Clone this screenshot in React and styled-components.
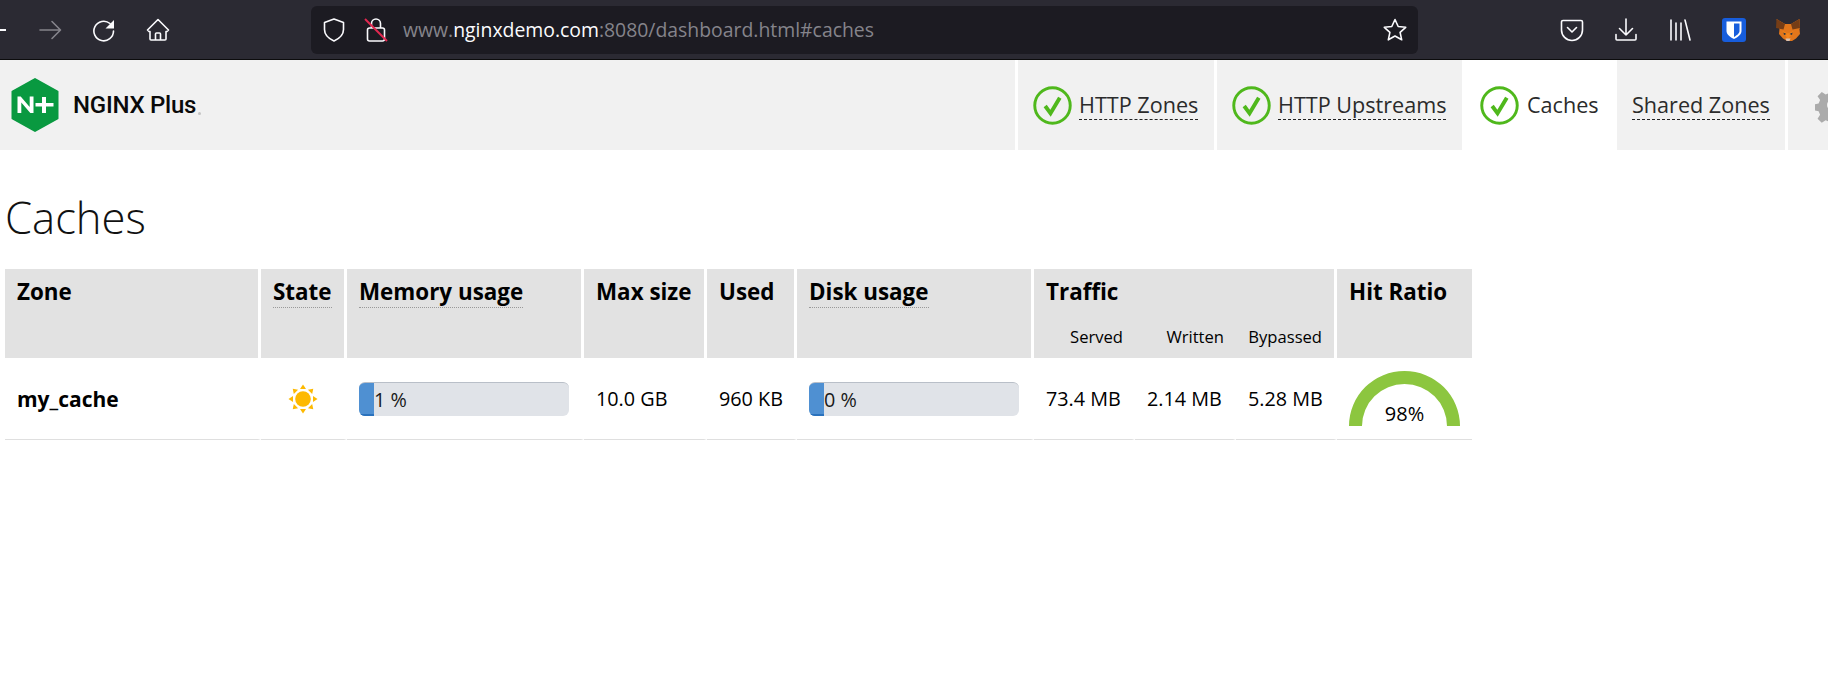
import React from "react";
import styled, { createGlobalStyle } from "styled-components";

const Global = createGlobalStyle`
  html, body { margin: 0; padding: 0; background: #fff; overflow: hidden; }
  body { font-family: "Open Sans", "Liberation Sans", sans-serif; color: #000; }
`;

const Chrome = styled.div`
  height: 59px; background: #2b2a33; border-bottom: 1px solid #0c0c0d;
  display: flex; align-items: center; position: relative;
`;
const ToolIcon = styled.svg`
  width: 24px; height: 24px; flex: none; display: block;
  fill: none; stroke: ${p => p.$dim ? "#85848b" : "#fbfbfe"}; stroke-width: 1.6; stroke-linecap: round; stroke-linejoin: round;
`;
const NavGroup = styled.div`
  display: flex; align-items: center; gap: 30px; width: 311px; padding-left: 38px; box-sizing: border-box;
`;
const BackStub = styled.div`
  position: absolute; left: 0; top: 29px; width: 6px; height: 2px; background: #fbfbfe;
`;
const UrlBar = styled.div`
  width: 1107px; height: 48px; background: #1c1b22; border-radius: 6px;
  display: flex; align-items: center; padding: 0 11px; box-sizing: border-box;
`;
const LockIcon = styled.svg`
  width: 24px; height: 24px; flex: none; margin-left: 18px;
`;
const UrlText = styled.div`
  flex: 1; margin-left: 15px; font-size: 19.4px; color: #85848b; white-space: nowrap;
  b { font-weight: 400; color: #fbfbfe; }
`;
const RightIcons = styled.div`
  display: flex; align-items: center; gap: 30px; margin-left: 142px;
`;
const ExtIcon = styled.svg`
  width: 24px; height: 24px; flex: none; display: block;
`;

const Nav = styled.div`
  height: 90px; display: flex; background: #fff; gap: 3px; overflow: hidden;
`;
const Brand = styled.div`
  width: 1015px; flex: none; background: #f1f1f1; display: flex; align-items: center; padding-left: 11px; box-sizing: border-box;
`;
const BrandMark = styled.svg`
  width: 48px; height: 54px; flex: none;
`;
const BrandName = styled.span`
  font-family: "Roboto", "Liberation Sans", sans-serif; font-weight: 500; font-size: 24px; letter-spacing: -.25px; margin-left: 14px; color: #0a0a0a;
`;
const BrandDot = styled.span`
  width: 3px; height: 3px; border-radius: 50%; background: #c4c4c4; margin: 16px 0 0 2px; flex: none;
`;
const Tab = styled.div`
  width: ${p => p.$w}px; flex: none; background: ${p => p.$active ? "#fff" : "#f1f1f1"};
  display: flex; align-items: center; padding-left: ${p => p.$pad}px; gap: ${p => p.$gap || 7}px; box-sizing: border-box;
  margin-left: ${p => p.$flush ? "-3px" : 0};
  font-size: 21.6px; color: #2b2b2b;
`;
const TabLabel = styled.span`
  border-bottom: ${p => p.$plain ? "1px solid transparent" : "1px dashed #222"};
  line-height: 28px; white-space: nowrap; margin-top: 1px;
`;

const Content = styled.div`
  padding: 0 0 0 5px;
`;
const Title = styled.h1`
  font-size: 43.6px; font-weight: 300; margin: 0; padding-top: 37px; height: 119px; line-height: 60px; box-sizing: border-box; color: #111;
`;
const Table = styled.table`
  border-collapse: separate; border-spacing: 0; table-layout: fixed; width: 1467px;
`;
const Col = styled.col`
  width: ${p => p.$w}px;
`;
const Th = styled.th`
  background: #e2e2e2; font-size: 22.4px; font-weight: 700; text-align: left; vertical-align: top;
  padding: 8px 12px 0; box-sizing: border-box; border-right: 3px solid #fff; height: 55px; line-height: 30px; white-space: nowrap;
  &:last-child { border-right: 0; }
`;
const SubTh = styled.th`
  background: #e2e2e2; font-size: 16.6px; font-weight: 400; text-align: right; padding: 3px 12px 0 0; height: 34px; line-height: 20px; vertical-align: top;
  box-sizing: border-box; border-right: ${p => p.$last ? "3px solid #fff" : "0"};
`;
const Hint = styled.span`
  border-bottom: 1px dotted #999; display: inline-block; line-height: 30px; height: 30px;
`;
const Td = styled.td`
  height: 82px; box-sizing: border-box; padding: 0 12px; border-bottom: 1px solid #dfdfdf; border-right: 3px solid #fff;
  font-weight: ${p => p.$bold ? 700 : 400}; white-space: nowrap;
  font-size: ${p => p.$bold ? 21 : 19.8}px;
  &:last-child { border-right: 0; }
`;
const Bar = styled.div`
  height: 34px; width: 210px; background: #e0e3e8; border-radius: 6px; border-top: 1px solid #b9bfc8; box-sizing: border-box;
  display: flex; align-items: center; overflow: hidden; font-size: 19.8px; color: #1a1a1a;
`;
const BarFill = styled.div`
  width: 15px; height: 100%; background: #4f90d2; border-bottom: 2px solid #2a72bd; box-sizing: border-box; flex: none;
`;
const Gauge = styled.div`
  position: relative; width: 111px; height: 55px;
`;
const GaugeArc = styled.svg`
  display: block; width: 111px; height: 55px;
`;
const GaugeText = styled.div`
  position: absolute; left: 0; right: 0; bottom: 0; text-align: center; font-size: 20px; line-height: 24px;
`;
const GaugeCell = styled(Td)`
  vertical-align: top; padding-top: 13px;
`;
const SunIcon = styled.svg`
  width: 30px; height: 30px; display: block; margin: 0 auto;
`;
const CheckIcon = styled.svg`
  width: 39px; height: 39px; flex: none;
`;
const GearIcon = styled.svg`
  width: 36px; height: 36px; flex: none;
`;

const Check = () => (
  <CheckIcon viewBox="0 0 40 40">
    <circle cx="20" cy="20" r="18.2" fill="none" stroke="#4fb81c" strokeWidth="3" />
    <path d="M12.5 20.5 L18 28 L27.5 12" fill="none" stroke="#4fb81c" strokeWidth="4" />
  </CheckIcon>
);

const Sun = () => (
  <SunIcon viewBox="0 0 30 30">
    <circle cx="15" cy="15" r="7.8" fill="#fdb900" />
    {[0, 45, 90, 135, 180, 225, 270, 315].map(a => (
      <polygon key={a} points="12,5 18,5 15,0.5" fill="#fdb900" transform={`rotate(${a} 15 15)`} />
    ))}
  </SunIcon>
);

export default function App() {
  return (
    <>
      <Global />
      <Chrome>
        <BackStub />
        <NavGroup>
          <ToolIcon viewBox="0 0 24 24" $dim><path d="M2 12h20M14 3.500l8.500 8.500-8.500 8.500" /></ToolIcon>
          <ToolIcon viewBox="0 0 24 24">
            <path d="M18 5.500A9.800 9.800 0 1 0 21.500 13" />
            <path d="M22 2v8.500h-8.500z" fill="#fbfbfe" stroke="none" />
          </ToolIcon>
          <ToolIcon viewBox="0 0 24 24"><path d="M12 1.500 1.500 12l1.500 1.500h1V21a1 1 0 0 0 1 1h14a1 1 0 0 0 1-1v-7.500h1l1.500-1.500zM9.500 22v-6a1 1 0 0 1 1-1h3a1 1 0 0 1 1 1v6" /></ToolIcon>
        </NavGroup>
        <UrlBar>
          <ToolIcon viewBox="0 0 24 24"><path d="M12 1 2.500 4.500v7c0 5.500 4 9 9.500 11.500 5.500-2.500 9.500-6 9.500-11.500v-7z" /></ToolIcon>
          <LockIcon viewBox="0 0 24 24">
            <g fill="none" stroke="#fbfbfe" strokeWidth="1.600"><path d="M7.500 10V5.500a4.500 4.500 0 0 1 9 0V10" /><rect x="3.500" y="10" width="17" height="13" rx="2" /></g>
            <path d="M1 1 23 23" stroke="#e22850" strokeWidth="2" />
          </LockIcon>
          <UrlText>www.<b>nginxdemo.com</b>:8080/dashboard.html#caches</UrlText>
          <ToolIcon viewBox="0 0 24 24"><path d="m12 1.500 3.200 7 7.500.8-5.600 5.100 1.600 7.400-6.700-3.800-6.700 3.800 1.600-7.400L1.300 9.300l7.500-.8z" /></ToolIcon>
        </UrlBar>
        <RightIcons>
          <ToolIcon viewBox="0 0 24 24"><path d="M3 2.500h18a1.500 1.500 0 0 1 1.500 1.500v8a10.500 10.500 0 0 1-21 0V4A1.500 1.500 0 0 1 3 2.500zM7.500 9.500l4.500 4.500 4.500-4.500" /></ToolIcon>
          <ToolIcon viewBox="0 0 24 24"><path d="M12 1v16M5.500 10.500l6.500 6.500 6.500-6.500M2 16.500V21a1 1 0 0 0 1 1h18a1 1 0 0 0 1-1v-4.500" /></ToolIcon>
          <ToolIcon viewBox="0 0 24 24"><path d="M3 2v20M8 5v17M13 5v17M17 2 22 22" /></ToolIcon>
          <ExtIcon viewBox="0 0 24 24">
            <rect width="24" height="24" rx="3" fill="#175ddc" />
            <path d="M4.500 3.500h15v9.500c0 3.500-3.500 6-7.500 8-4-2-7.500-4.500-7.500-8z" fill="#fff" />
            <path d="M12 5.500h5.500v7.500c0 2.500-3 4.500-5.500 6z" fill="#175ddc" />
          </ExtIcon>
          <ExtIcon viewBox="0 0 24 24">
            <path d="M.5 1l8.500 5h6l8.500-5 .5 9-.5 1 .5 5-4 4.500-4 2.500h-5l-4-2.500-4-4.500.5-5-.5-1z" fill="#e2761b" />
            <path d="M.5 1 9 6l-1.500 5.500L0 10zM23.500 1 15 6l1.500 5.500L24 10z" fill="#763d16" />
            <path d="M6.500 13l5.500 8.500 5.500-8.500-5.500 2.500z" fill="#f6851b" />
            <path d="M9.500 20.500h5l-1 2.500h-3z" fill="#d7c1b3" />
            <path d="M7.500 14.500l3 1.500-2.500 1zM16.500 14.500l-3 1.500 2.500 1z" fill="#233447" />
          </ExtIcon>
        </RightIcons>
      </Chrome>
      <Nav>
        <Brand>
          <BrandMark viewBox="0 0 48 54">
            <path d="M24 1 46.500 13.500v27L24 53 1.500 40.500v-27z" fill="#099940" stroke="#099940" strokeWidth="2" strokeLinejoin="round" />
            <path d="M6.500 35V18.500h3.200l9 10.500V18.500H22.500V35h-3.200l-9-10.500V35z M24.500 25h6.500v-6h4v6h7.500v3.500H35V35h-4v-6.500h-6.500z" fill="#fff" />
          </BrandMark>
          <BrandName>NGINX Plus</BrandName>
          <BrandDot />
        </Brand>
        <Tab $w={196} $pad={15}><Check /><TabLabel>HTTP Zones</TabLabel></Tab>
        <Tab $w={245} $pad={15}><Check /><TabLabel>HTTP Upstreams</TabLabel></Tab>
        <Tab $w={155} $pad={18} $gap={8} $active $flush><Check /><TabLabel $plain>Caches</TabLabel></Tab>
        <Tab $w={168} $pad={15} $flush><TabLabel>Shared Zones</TabLabel></Tab>
        <Tab $w={41} $pad={27}>
          <GearIcon viewBox="0 0 24 24">
            <path fill="#ababab" fillRule="evenodd" d="M10 1h4l.6 3 2.300 1 2.600-1.700 2.800 2.800-1.700 2.600 1 2.300 3 .6v4l-3 .6-1 2.300 1.700 2.600-2.800 2.800-2.600-1.700-2.300 1-.6 3h-4l-.6-3-2.300-1-2.600 1.700-2.800-2.800 1.700-2.600-1-2.300-3-.6v-4l3-.6 1-2.300L1.700 6.100l2.800-2.800 2.600 1.700 2.300-1zM12 8a4 4 0 1 0 0 8 4 4 0 0 0 0-8z" />
          </GearIcon>
        </Tab>
      </Nav>
      <Content>
        <Title>Caches</Title>
        <Table>
          <colgroup>
            <Col $w={256} /><Col $w={86} /><Col $w={237} /><Col $w={123} /><Col $w={90} /><Col $w={237} />
            <Col $w={101} /><Col $w={101} /><Col $w={101} /><Col $w={135} />
          </colgroup>
          <thead>
            <tr>
              <Th rowSpan={2}>Zone</Th>
              <Th rowSpan={2}><Hint>State</Hint></Th>
              <Th rowSpan={2}><Hint>Memory usage</Hint></Th>
              <Th rowSpan={2}>Max size</Th>
              <Th rowSpan={2}>Used</Th>
              <Th rowSpan={2}><Hint>Disk usage</Hint></Th>
              <Th colSpan={3}>Traffic</Th>
              <Th rowSpan={2}>Hit Ratio</Th>
            </tr>
            <tr>
              <SubTh>Served</SubTh>
              <SubTh>Written</SubTh>
              <SubTh $last>Bypassed</SubTh>
            </tr>
          </thead>
          <tbody>
            <tr>
              <Td $bold>my_cache</Td>
              <Td><Sun /></Td>
              <Td><Bar><BarFill />1 %</Bar></Td>
              <Td>10.0 GB</Td>
              <Td>960 KB</Td>
              <Td><Bar><BarFill />0 %</Bar></Td>
              <Td>73.4 MB</Td>
              <Td>2.14 MB</Td>
              <Td>5.28 MB</Td>
              <GaugeCell>
                <Gauge>
                  <GaugeArc viewBox="0 0 111 55">
                    <path d="M0 55a55.500 55 0 0 1 111 0H98a42.500 42 0 0 0-85 0z" fill="#8cc63f" />
                  </GaugeArc>
                  <GaugeText>98%</GaugeText>
                </Gauge>
              </GaugeCell>
            </tr>
          </tbody>
        </Table>
      </Content>
    </>
  );
}
